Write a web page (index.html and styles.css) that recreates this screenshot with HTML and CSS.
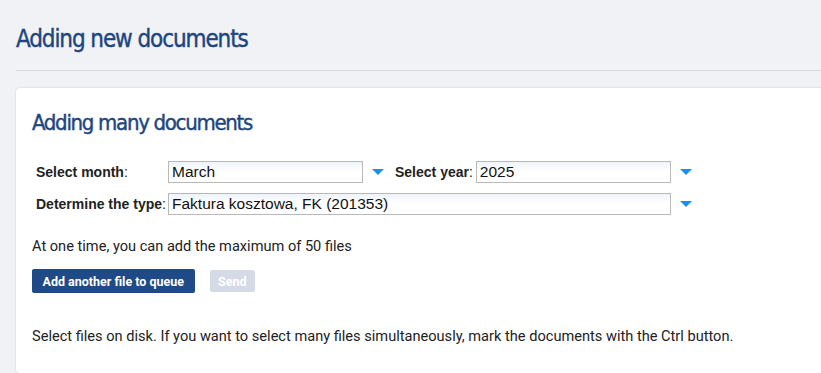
FILE: index.html
```html
<!DOCTYPE html>
<html lang="en">
<head>
    <meta charset="UTF-8">
    <meta name="viewport" content="width=device-width, initial-scale=1.0">
    <title>Adding new documents</title>
    <link rel="stylesheet" href="styles.css">
</head>
<body>
    <div class="page">
        <h1 class="page-title">Adding new documents</h1>
        <div class="card">
            <h2 class="card-title">Adding many documents</h2>
            <div class="form-grid">
                <div class="row">
                    <label class="label label-month"><b>Select month</b>:</label>
                    <div class="select short">March</div>
                    <span class="arrow"></span>
                    <label class="label label-year"><b>Select year</b>:</label>
                    <div class="select short">2025</div>
                    <span class="arrow"></span>
                </div>
                <div class="row">
                    <label class="label label-type"><b>Determine the type</b>:</label>
                    <div class="select long">Faktura kosztowa, FK (201353)</div>
                    <span class="arrow"></span>
                </div>
            </div>
            <p class="note">At one time, you can add the maximum of 50 files</p>
            <div class="buttons">
                <button class="btn btn-primary">Add another file to queue</button>
                <button class="btn btn-disabled">Send</button>
            </div>
            <p class="hint">Select files on disk. If you want to select many files simultaneously, mark the documents with the Ctrl button.</p>
        </div>
    </div>
</body>
</html>
```

FILE: styles.css
```css
body {
    margin: 0;
    background-color: #f1f2f6;
    font-family: Roboto, Arial, sans-serif;
    color: #222;
    overflow: hidden;
}
.page {
    padding: 0 0 0 16px;
}
.page-title {
    margin: 0;
    padding: 25px 0 20px;
    font-family: "DejaVu Sans Condensed", "DejaVu Sans", sans-serif;
    font-weight: normal;
    font-size: 24px;
    letter-spacing: -1.1px;
    color: #1d4680;
    border-bottom: 1px solid #d8d9dd;
    height: 25px;
    -webkit-text-stroke: 0.4px #1d4680;
}
.card {
    margin-top: 17px;
    margin-right: -20px;
    background: #fff;
    border-radius: 4px;
    box-shadow: 0 0 2px rgba(0, 0, 0, 0.18);
    padding: 22px 16px 18px;
}
.card-title {
    margin: 0 0 25px;
    font-family: "DejaVu Sans Condensed", "DejaVu Sans", sans-serif;
    font-weight: normal;
    font-size: 22px;
    letter-spacing: -1.3px;
    color: #1d4680;
    height: 26px;
    -webkit-text-stroke: 0.4px #1d4680;
}
.form-grid {
    padding-left: 4px;
}
.row {
    display: flex;
    align-items: center;
    margin-bottom: 10px;
    font-family: "Liberation Sans", Arial, sans-serif;
    font-size: 14px;
}
.label {
    color: #222;
}
.label-month {
    width: 132px;
}
.label-year {
    margin-left: 11px;
    margin-right: 3px;
}
.label-type {
    width: 132px;
}
.select {
    box-sizing: border-box;
    height: 22px;
    line-height: 20px;
    padding: 0 3px;
    font-size: 15.5px;
    border: 1px solid #b9b9b9;
    background: linear-gradient(#eef3fb, #fff 45%);
    color: #111;
}
.short {
    width: 195px;
}
.long {
    width: 503px;
}
.arrow {
    display: inline-block;
    width: 0;
    height: 0;
    margin-left: 9px;
    border-left: 6px solid transparent;
    border-right: 6px solid transparent;
    border-top: 6px solid #1e8ee6;
}
.note {
    margin: 22px 0 14px;
    font-size: 14.6px;
}
.buttons {
    display: flex;
    align-items: center;
    gap: 15px;
}
.btn {
    border: none;
    border-radius: 2px;
    font-family: Roboto, Arial, sans-serif;
    font-weight: bold;
    font-size: 12.5px;
    color: #fff;
    padding: 0 11px;
    height: 24px;
}
.btn-primary {
    background: #1f4a85;
    padding: 0 10.5px;
}
.btn-disabled {
    background: #d5dbe6;
    height: 22px;
    padding: 0 8.5px;
}
.hint {
    margin: 34px 0 0;
    font-size: 14.6px;
    height: 28px;
}
```
